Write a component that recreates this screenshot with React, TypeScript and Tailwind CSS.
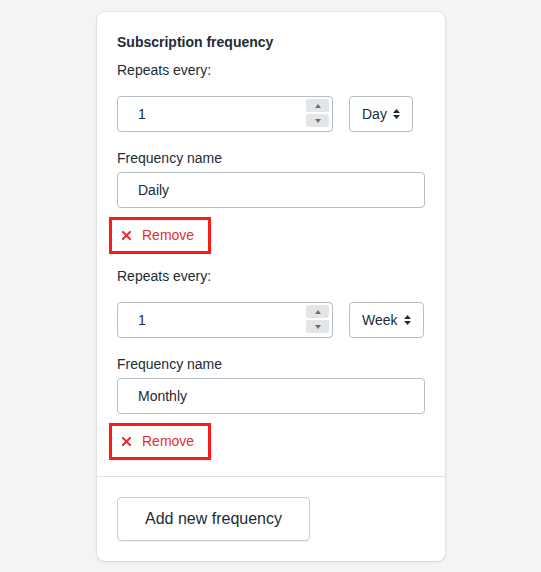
import React from 'react';

const font = { fontFamily: '"Liberation Sans", Arial, sans-serif' };

function Spinner() {
  return (
    <div className="absolute right-[3px] top-[2px] flex flex-col gap-[2px]">
      <button className="flex h-[13px] w-[23px] items-center justify-center rounded-[2px] bg-[#e4e5e7]">
        <svg width="6" height="4" viewBox="0 0 6 4"><path d="M0 4 L3 0 L6 4 Z" fill="#637381" /></svg>
      </button>
      <button className="flex h-[13px] w-[23px] items-center justify-center rounded-[2px] bg-[#e4e5e7]">
        <svg width="6" height="4" viewBox="0 0 6 4"><path d="M0 0 L3 4 L6 0 Z" fill="#637381" /></svg>
      </button>
    </div>
  );
}

function Caret() {
  return (
    <svg width="7" height="10" viewBox="0 0 7 10" className="ml-[6px]">
      <path d="M0 4 L3.5 0 L7 4 Z" fill="#212b36" />
      <path d="M0 6 L3.5 10 L7 6 Z" fill="#212b36" />
    </svg>
  );
}

function RemoveButton() {
  return (
    <button className="-ml-[8px] flex h-[37px] w-[102px] items-center border-[3px] border-[#ff1a1a] pl-[10px] text-[14px] text-[#de3030]">
      <svg width="9" height="9" viewBox="0 0 9 9">
        <path d="M1 1 L8 8 M8 1 L1 8" stroke="#de3030" strokeWidth="2" strokeLinecap="square" />
      </svg>
      <span className="ml-[11px]">Remove</span>
    </button>
  );
}

interface FrequencyProps {
  unit: string;
  unitWidth: string;
  name: string;
  first?: boolean;
}

function Frequency({ unit, unitWidth, name, first }: FrequencyProps) {
  return (
    <div className="flex flex-col">
      <div className={first ? 'mt-2 h-5 text-[14px] leading-5' : 'mt-[12px] h-5 text-[14px] leading-5'}>Repeats every:</div>
      <div className="mt-4 flex items-center gap-4">
        <div className="relative flex h-9 w-[216px] items-center rounded-[4px] border border-[#b5bdc5] pl-5 text-[14px]">
          1
          <Spinner />
        </div>
        <div className={`flex h-9 ${unitWidth} items-center rounded-[4px] border border-[#b5bdc5] pl-3 text-[14px]`}>
          {unit}
          <Caret />
        </div>
      </div>
      <div className="mt-4 h-5 text-[14px] leading-5">Frequency name</div>
      <div className="mt-1 flex h-9 w-[308px] items-center rounded-[4px] border border-[#b5bdc5] pl-5 text-[14px]">
        {name}
      </div>
      <div className="mt-[9px]">
        <RemoveButton />
      </div>
    </div>
  );
}

export default function App() {
  return (
    <div className="min-h-[572px] bg-[#f4f4f4] pl-[97px] pt-3 text-[#212b36]" style={font}>
      <div className="w-[348px] rounded-lg bg-white shadow-[0_0_0_1px_rgba(63,63,68,0.05),0_1px_3px_0_rgba(63,63,68,0.15)]">
        {/* Frequencies */}
        <div className="px-5 pb-[16px] pt-5">
          <h2 className="h-5 text-[14px] font-bold leading-5">Subscription frequency</h2>
          <Frequency first unit="Day" unitWidth="w-[64px]" name="Daily" />
          <Frequency unit="Week" unitWidth="w-[75px]" name="Monthly" />
        </div>
        {/* Footer */}
        <div className="border-t border-[#dfe3e8] px-5 pb-5 pt-5">
          <button className="flex h-[44px] w-[193px] items-center justify-center rounded-[4px] border border-[#c4cdd5] text-[16px] shadow-[0_1px_0_0_rgba(22,29,37,0.05)]">
            Add new frequency
          </button>
        </div>
      </div>
    </div>
  );
}
